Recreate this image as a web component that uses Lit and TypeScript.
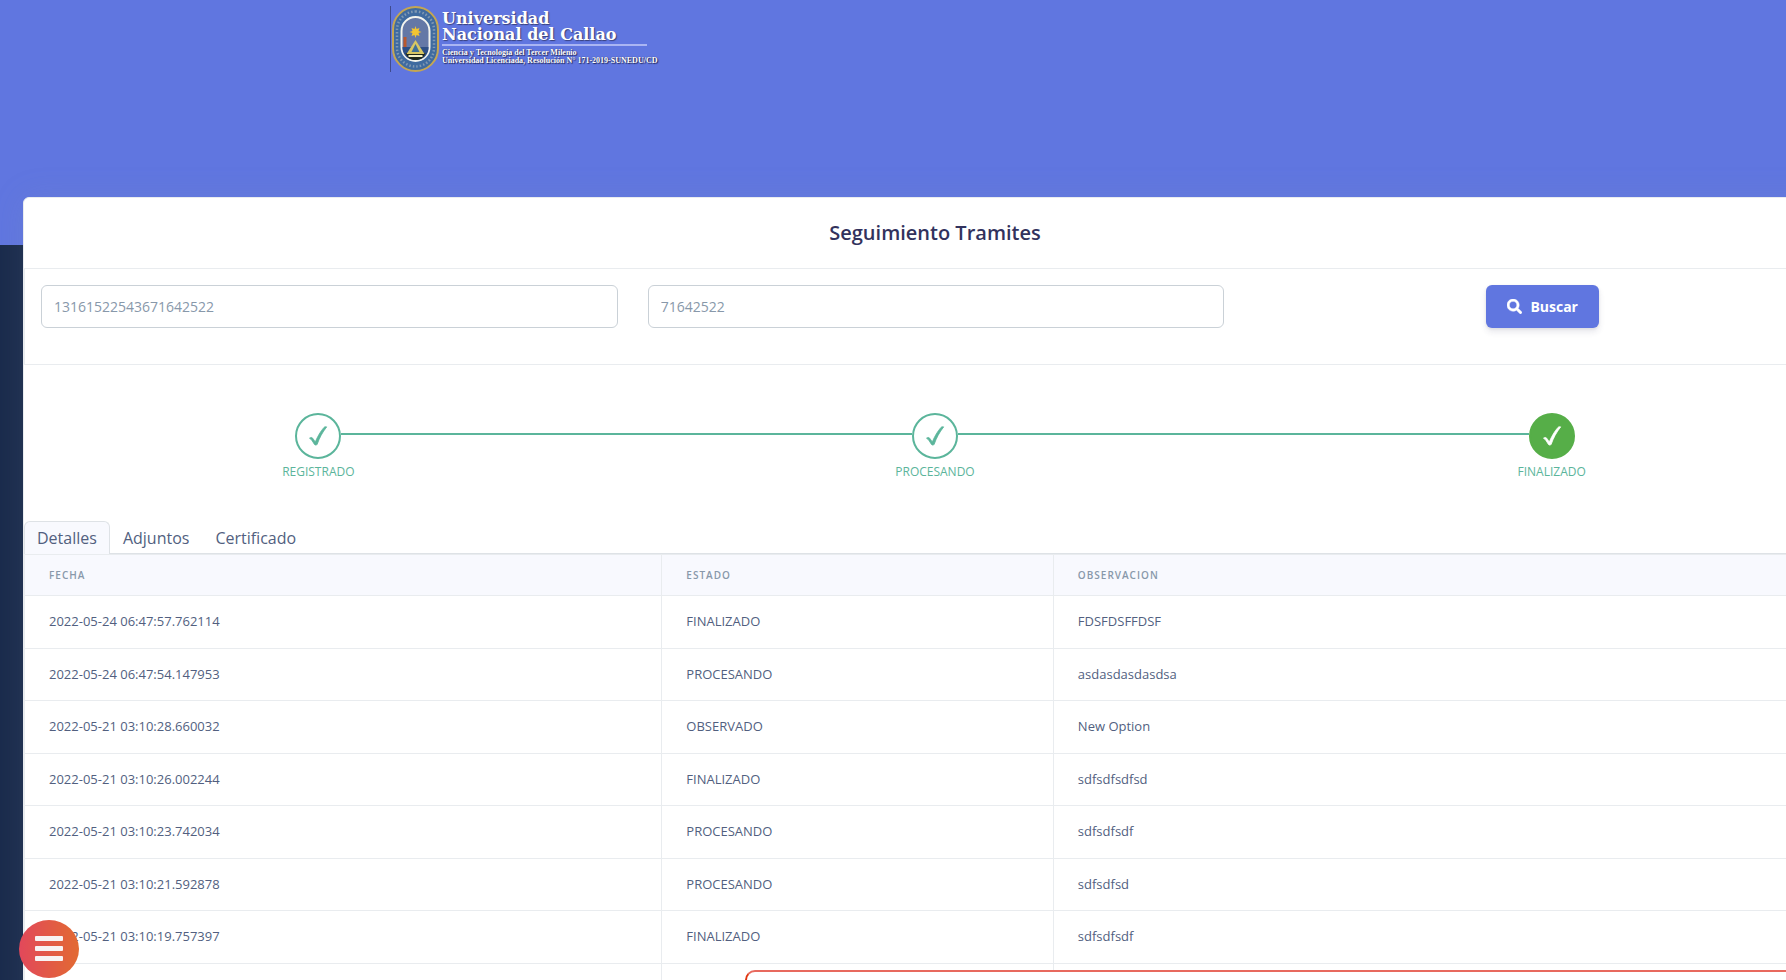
import { LitElement, html, css } from "lit";
import { customElement, state } from "lit/decorators.js";

interface Movimiento {
  fecha: string;
  estado: string;
  observacion: string;
}

const MOVIMIENTOS: Movimiento[] = [
  { fecha: "2022-05-24 06:47:57.762114", estado: "FINALIZADO", observacion: "FDSFDSFFDSF" },
  { fecha: "2022-05-24 06:47:54.147953", estado: "PROCESANDO", observacion: "asdasdasdasdsa" },
  { fecha: "2022-05-21 03:10:28.660032", estado: "OBSERVADO", observacion: "New Option" },
  { fecha: "2022-05-21 03:10:26.002244", estado: "FINALIZADO", observacion: "sdfsdfsdfsd" },
  { fecha: "2022-05-21 03:10:23.742034", estado: "PROCESANDO", observacion: "sdfsdfsdf" },
  { fecha: "2022-05-21 03:10:21.592878", estado: "PROCESANDO", observacion: "sdfsdfsd" },
  { fecha: "2022-05-21 03:10:19.757397", estado: "FINALIZADO", observacion: "sdfsdfsdf" },
];

const PASOS = [
  { nombre: "REGISTRADO", actual: false },
  { nombre: "PROCESANDO", actual: false },
  { nombre: "FINALIZADO", actual: true },
];

const TABS = ["Detalles", "Adjuntos", "Certificado"];

@customElement("unac-logo")
export class UnacLogo extends LitElement {
  static styles = css`
    :host {
      display: flex;
      gap: 2px;
      color: #fff;
    }
    .crest {
      display: block;
      width: 49px;
      height: 66px;
      border-left: 1px solid #3f4a8c;
    }
    .words {
      padding-top: 5px;
    }
    .name {
      font-family: "DejaVu Serif", serif;
      font-size: 16px;
      line-height: 16px;
      font-weight: 700;
      white-space: nowrap;
      text-shadow: 1px 1px 1px #39407a;
    }
    .rule {
      width: 205px;
      height: 2px;
      margin: 1px 0 3px;
      background: #aab5f3;
    }
    .motto {
      font-family: "Liberation Serif", serif;
      font-size: 8px;
      line-height: 8px;
      font-weight: 700;
      white-space: nowrap;
      text-shadow: 0 0 1px #252b60, 1px 1px 1px #252b60;
    }
  `;

  render() {
    return html`
      <svg class="crest" viewBox="0 0 48 66" aria-hidden="true">
        <rect x="1.5" y="1" width="45" height="64" rx="22.5" fill="#3f6ba0" stroke="#c4a653" stroke-width="2" />
        <rect x="5.5" y="5.5" width="37" height="55" rx="18.5" fill="none" stroke="#8099b3" stroke-width="2.5" stroke-dasharray="1.5 2" />
        <rect x="10" y="11" width="28" height="44" rx="14" fill="#6478a6" stroke="#f3f4ee" stroke-width="2" />
        <path d="M11 41h26v2c-1 7-6 11-13 11S12 50 11 43z" fill="#2d4f86" />
        <path d="M14 47h20c-2 5-5 7-10 7s-8-2-10-7z" fill="#20291d" />
        <path d="M24 34l9 14H15z" fill="#d8c763" />
        <path d="M24 38l4 8h-8z" fill="#3f7099" />
        <path d="M12 39v-8h3v10h-3z" fill="#b9582e" />
        <path d="M17 50h14" stroke="#f4f0c0" stroke-width="2" />
        <path d="M24 20l1 3 3-1-1 3 3 1-3 1 1 3-3-1-1 3-1-3-3 1 1-3-3-1 3-1-1-3 3 1z" fill="#f3c531" />
      </svg>
      <div class="words">
        <div class="name">Universidad</div>
        <div class="name">Nacional del Callao</div>
        <div class="rule"></div>
        <div class="motto">Ciencia y Tecnología del Tercer Milenio</div>
        <div class="motto">Universidad Licenciada, Resolución N° 171-2019-SUNEDU/CD</div>
      </div>
    `;
  }
}

@customElement("app-root")
export class AppRoot extends LitElement {
  @state() private tab = TABS[0];

  static styles = css`
    :host {
      display: block;
      height: 100vh;
      overflow: hidden;
      background: linear-gradient(#6076e0 245px, #1a2b4c 245px);
      color: #525f7f;
      font: 400 16px/24px "Open Sans", sans-serif;
    }
    * {
      box-sizing: border-box;
    }
    .page {
      margin-right: -84px;
      padding: 0 23px;
    }
    .top {
      height: 197px;
      padding: 6px 367px 0;
    }
    .card {
      min-height: 900px;
      border: 1px solid #e9ecef;
      border-radius: 6px;
      background: #fff;
      box-shadow: 0 0 32px rgba(136, 152, 170, 0.15);
    }
    .title {
      margin: 0;
      padding: 20px 24px;
      color: #32325d;
      font-size: 20px;
      line-height: 30px;
      font-weight: 600;
      text-align: center;
    }
    .search {
      display: grid;
      grid-template-columns: repeat(3, 1fr);
      gap: 30px;
      padding: 16px 15px 36px 16px;
      border: 1px solid #e9ecef;
      border-right: 0;
    }
    .field {
      display: block;
      width: 100%;
      height: 43px;
      padding: 0 12px;
      border: 1px solid #cad1d7;
      border-radius: 6px;
      background: #fff;
      color: #8898aa;
      font: inherit;
      font-size: 14px;
    }
    .submit {
      display: flex;
      align-items: center;
      gap: 8px;
      justify-self: center;
      height: 43px;
      padding: 0 21px;
      border: 0;
      border-radius: 6px;
      background: #6076e0;
      box-shadow: 0 4px 6px rgba(50, 50, 93, 0.11), 0 1px 3px rgba(0, 0, 0, 0.08);
      color: #fff;
      font: inherit;
      font-size: 14px;
      font-weight: 700;
    }
    .glass {
      width: 15px;
      height: 15px;
    }
    .steps {
      display: grid;
      grid-template-columns: repeat(3, 1fr);
      margin: 48px -14px 0;
      padding: 0;
      list-style: none;
    }
    .step {
      display: grid;
      grid-template-columns: 1fr 46px 1fr;
      align-items: center;
      color: #5bb59b;
      font-size: 12px;
      line-height: 16px;
    }
    .dot {
      display: flex;
      grid-column: 2;
      align-items: center;
      justify-content: center;
      height: 46px;
      border: 2px solid #5bb59b;
      border-radius: 50%;
    }
    .step.now .dot {
      border-color: #56ae48;
      background: #56ae48;
      color: #fff;
    }
    .tick {
      width: 20px;
      height: 22px;
    }
    .step::before,
    .step::after {
      content: "";
      height: 2px;
      margin-bottom: 4px;
      background: #5bb59b;
    }
    .step::before {
      grid-area: 1 / 1;
    }
    .step::after {
      grid-area: 1 / 3;
    }
    .step:first-child::before,
    .step:last-child::after {
      visibility: hidden;
    }
    .label {
      grid-area: 2 / 1 / 3 / 4;
      padding-top: 5px;
      text-align: center;
    }
    .tabs {
      display: flex;
      margin-top: 41px;
      border-bottom: 1px solid #dee2e6;
    }
    .tab {
      height: 33px;
      margin-bottom: -1px;
      padding: 0 12px;
      border: 1px solid transparent;
      border-bottom: 0;
      border-radius: 6px 6px 0 0;
      background: none;
      color: #525f7f;
      font: inherit;
    }
    .tab.on {
      border-color: #dee2e6;
      background: #f8f9fe;
    }
    .data {
      width: 100%;
      border-collapse: collapse;
      table-layout: fixed;
    }
    .data th,
    .data td {
      border: 1px solid #e9ecef;
      padding: 16px 24px;
      font-size: 13px;
      line-height: 1.5;
      text-align: left;
      white-space: nowrap;
    }
    .data th {
      padding: 12px 24px;
      background: #f8f9fe;
      color: #8898aa;
      font-size: 10px;
      line-height: 16px;
      font-weight: 600;
      letter-spacing: 1px;
    }
    .c1 {
      width: 35%;
    }
    .c2 {
      width: 21.5%;
    }
    .menu {
      position: fixed;
      left: 19px;
      bottom: 2px;
      display: flex;
      align-items: center;
      justify-content: center;
      width: 60px;
      height: 58px;
      padding: 0;
      border: 0;
      border-radius: 50%;
      background: linear-gradient(90deg, #e2485b, #e26a32);
    }
    .bars {
      width: 28px;
      height: 28px;
    }
    .notice {
      position: fixed;
      top: calc(100vh - 10px);
      left: 745px;
      right: -20px;
      height: 60px;
      border: 2px solid #e8695e;
      border-left-color: #e0340f;
      border-radius: 10px;
      background: #fff;
    }
  `;

  private buscar(e: Event) {
    e.preventDefault();
  }

  render() {
    return html`
      <div class="page">
        <header class="top"><unac-logo></unac-logo></header>
        <main class="card">
          <h1 class="title">Seguimiento Tramites</h1>
          <form class="search" @submit=${this.buscar}>
            <input class="field" aria-label="Número de trámite" .value=${"13161522543671642522"} />
            <input class="field" aria-label="Número de documento" .value=${"71642522"} />
            <button class="submit" type="submit">
              <svg class="glass" viewBox="0 0 512 512" fill="currentColor" stroke="currentColor" stroke-width="16" aria-hidden="true">
                <path d="M505 442.7L405.3 343c-4.5-4.5-10.6-7-17-7H372c27.600-35.300 44-79.700 44-128C416 93.100 322.900 0 208 0S0 93.100 0 208s93.100 208 208 208c48.300 0 92.700-16.400 128-44v16.300c0 6.400 2.500 12.500 7 17l99.700 99.700c9.400 9.400 24.600 9.400 33.900 0l28.300-28.300c9.400-9.400 9.400-24.600.1-34zM208 336c-70.700 0-128-57.200-128-128 0-70.700 57.200-128 128-128 70.700 0 128 57.200 128 128 0 70.700-57.200 128-128 128z" />
              </svg>
              Buscar
            </button>
          </form>

          <ol class="steps">
            ${PASOS.map(
              (p) => html`
                <li class="step ${p.actual ? "now" : ""}">
                  <span class="dot">
                    <svg class="tick" viewBox="0 0 20 22" fill="currentColor" stroke="currentColor" stroke-width="0.8" stroke-linejoin="round" aria-hidden="true">
                      <path d="M1.500 13.200c1-.9 2.300-1 3.200 0 1 1.100 1.700 2.700 2.600 3.700C9.600 11.500 12.300 6.600 16 2.400c.7-.8 1.700-.7 2.700-.5C14.500 7.200 11.300 13 9.200 19.300c-.4 1-2.100 1-2.700.2C4.900 17.200 3.800 14.300 1.500 13.200z" />
                    </svg>
                  </span>
                  <span class="label">${p.nombre}</span>
                </li>
              `
            )}
          </ol>

          <div class="tabs" role="tablist">
            ${TABS.map(
              (t) => html`
                <button
                  class="tab ${t === this.tab ? "on" : ""}"
                  role="tab"
                  aria-selected=${t === this.tab ? "true" : "false"}
                  @click=${() => (this.tab = t)}
                >${t}</button>
              `
            )}
          </div>
          <table class="data">
            <colgroup>
              <col class="c1" />
              <col class="c2" />
              <col />
            </colgroup>
            <thead>
              <tr>
                <th scope="col">FECHA</th>
                <th scope="col">ESTADO</th>
                <th scope="col">OBSERVACION</th>
              </tr>
            </thead>
            <tbody>
              ${MOVIMIENTOS.map(
                (m) => html`<tr><td>${m.fecha}</td><td>${m.estado}</td><td>${m.observacion}</td></tr>`
              )}
              <tr><td>&nbsp;</td><td></td><td></td></tr>
            </tbody>
          </table>
        </main>
      </div>
      <button class="menu" type="button" aria-label="Menú">
        <svg class="bars" viewBox="0 0 28 28" fill="#f7f3f3" aria-hidden="true">
          <rect y="1" width="28" height="5" rx="1" />
          <rect y="11" width="28" height="5" rx="1" />
          <rect y="21" width="28" height="5" rx="1" />
        </svg>
      </button>
      <div class="notice" role="status"></div>
    `;
  }
}
